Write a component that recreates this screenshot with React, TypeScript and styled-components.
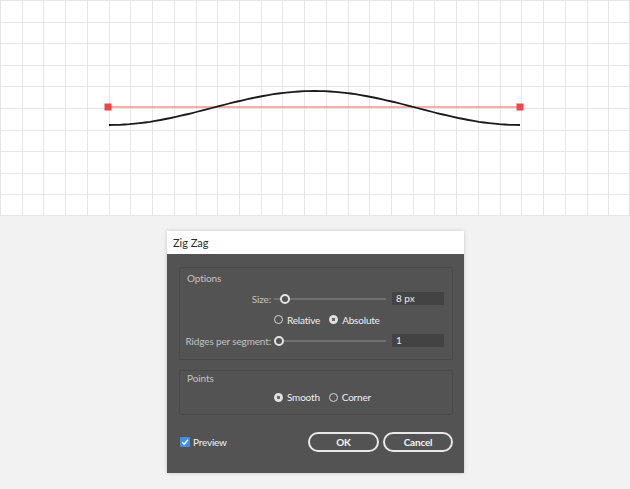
import React from "react";
import styled, { createGlobalStyle } from "styled-components";

const GlobalStyle = createGlobalStyle`
  html, body {
    margin: 0;
    padding: 0;
    background: #f2f2f2;
    font-family: Lato, "Open Sans", sans-serif;
  }
`;

const Page = styled.div`
  display: flex;
  flex-direction: column;
  width: 630px;
  height: 489px;
  overflow: hidden;
`;

const Canvas = styled.div`
  height: 216px;
  background: #ffffff;
  svg {
    display: block;
  }
`;

const Stage = styled.div`
  display: flex;
  justify-content: center;
  padding-top: 15px;
`;

const Dialog = styled.div`
  width: 297px;
  margin-left: 1px;
  box-shadow: 0 0 4px rgba(0, 0, 0, 0.18);
`;

const TitleBar = styled.div`
  height: 23px;
  display: flex;
  align-items: center;
  padding-left: 6px;
  background: #ffffff;
  color: #2b2b2b;
  font-size: 11px;
`;

const Body = styled.div`
  height: 219px;
  box-sizing: border-box;
  background: #535353;
  padding: 13px 11px 0 12px;
`;

const Group = styled.div<{ $gap?: number }>`
  border: 1px solid #4a4a4a;
  border-radius: 2px;
  margin-top: ${(p) => p.$gap ?? 0}px;
  padding-bottom: ${(p) => (p.$gap ? 7 : 8)}px;
`;

const GroupLabel = styled.div<{ $h: number; $pt: number }>`
  height: ${(p) => p.$h}px;
  box-sizing: border-box;
  padding: ${(p) => p.$pt}px 0 0 7px;
  line-height: 12px;
  font-size: 10px;
  letter-spacing: -0.1px;
  color: #c4c4c4;
`;

const Row = styled.div<{ $h?: number }>`
  display: grid;
  grid-template-columns: 94px 118px 52px;
  align-items: center;
  height: ${(p) => p.$h ?? 21}px;
`;

const FieldLabel = styled.span`
  justify-self: end;
  margin-right: 3px;
  font-size: 10px;
  letter-spacing: -0.15px;
  color: #c2c2c2;
  white-space: nowrap;
`;

const Track = styled.div`
  position: relative;
  height: 2px;
  margin-right: 6px;
  background: #707070;
`;

const Knob = styled.span`
  position: absolute;
  top: -4px;
  width: 10px;
  height: 10px;
  box-sizing: border-box;
  border-radius: 50%;
  border: 2px solid #e4e4e4;
  background: #535353;
`;

const NumberBox = styled.div`
  height: 13px;
  background: #434343;
  color: #ececec;
  font-size: 10px;
  line-height: 13px;
  padding-left: 4px;
`;

const RadioSet = styled.div`
  grid-column: 2 / 4;
  display: flex;
  align-items: center;
  gap: 9px;
`;

const RadioItem = styled.label`
  display: flex;
  align-items: center;
  gap: 4px;
  font-size: 10px;
  letter-spacing: -0.2px;
  color: #f0f0f0;
`;

const RadioDot = styled.span<{ $on?: boolean }>`
  width: 9px;
  height: 9px;
  box-sizing: border-box;
  border-radius: 50%;
  border: ${(p) => (p.$on ? "2px solid #e0e0e0" : "1px solid #d6d6d6")};
  background: ${(p) => (p.$on ? "radial-gradient(circle, #6a6a6a 0 1.5px, #e0e0e0 2px)" : "transparent")};
`;

const Footer = styled.div`
  display: flex;
  align-items: center;
  height: 20px;
  margin-top: 17px;
  padding-left: 1px;
`;

const Check = styled.label`
  display: flex;
  align-items: center;
  gap: 3px;
  font-size: 10px;
  letter-spacing: -0.2px;
  color: #f4f4f4;
  svg {
    display: block;
  }
`;

const Buttons = styled.div`
  margin-left: auto;
  display: flex;
  gap: 4px;
`;

const PillButton = styled.button<{ $w: number }>`
  width: ${(p) => p.$w}px;
  height: 20px;
  border: 2px solid #e8e8e8;
  border-radius: 10px;
  background: transparent;
  color: #f4f4f4;
  font-family: Lato, "Open Sans", sans-serif;
  font-size: 10px;
  font-weight: 700;
  letter-spacing: -0.2px;
  padding: 0;
`;

const Radio = ({ on, text }: { on?: boolean; text: string }) => (
  <RadioItem>
    <RadioDot $on={on} />
    {text}
  </RadioItem>
);

const Slider = ({ at }: { at: number }) => (
  <Track>
    <Knob style={{ left: at }} />
  </Track>
);

const GridDrawing = () => {
  const cols = Array.from({ length: 30 }, (_, i) => Math.min(629.5, Math.round((i * 630) / 29) + 0.5));
  const rows = Array.from({ length: 11 }, (_, j) => Math.min(215.5, Math.round(j * 21.6) + 0.5));
  const pts = Array.from({ length: 81 }, (_, i) => {
    const t = i / 80;
    return `${(109 + 411 * t).toFixed(1)},${(108 + 17 * Math.cos(2 * Math.PI * t)).toFixed(1)}`;
  }).join(" ");
  return (
    <svg width="630" height="216" viewBox="0 0 630 216">
      <g stroke="#e6e6e6" strokeWidth="1" shapeRendering="crispEdges">
        {cols.map((x) => (
          <line key={"c" + x} x1={x} y1="0" x2={x} y2="216" />
        ))}
        {rows.map((y) => (
          <line key={"r" + y} x1="0" y1={y} x2="630" y2={y} />
        ))}
      </g>
      <line x1="108" y1="107" x2="520" y2="107" stroke="#f25c5c" strokeWidth="1" />
      <polyline points={pts} fill="none" stroke="#1a1a1a" strokeWidth="1.8" />
      <rect x="104.5" y="103.5" width="7" height="7" fill="#ef4646" />
      <rect x="516.5" y="103.5" width="7" height="7" fill="#ef4646" />
    </svg>
  );
};

export default function App() {
  return (
    <Page>
      <GlobalStyle />
      <Canvas>
        <GridDrawing />
      </Canvas>
      <Stage>
        <Dialog>
          <TitleBar>Zig Zag</TitleBar>
          <Body>
            <Group>
              <GroupLabel $h={20} $pt={4}>Options</GroupLabel>
              <Row>
                <FieldLabel>Size:</FieldLabel>
                <Slider at={6} />
                <NumberBox>8 px</NumberBox>
              </Row>
              <Row>
                <span />
                <RadioSet>
                  <Radio text="Relative" />
                  <Radio on text="Absolute" />
                </RadioSet>
              </Row>
              <Row>
                <FieldLabel>Ridges per segment:</FieldLabel>
                <Slider at={0} />
                <NumberBox>1</NumberBox>
              </Row>
            </Group>
            <Group $gap={10}>
              <GroupLabel $h={16} $pt={1}>Points</GroupLabel>
              <Row $h={20}>
                <span />
                <RadioSet>
                  <Radio on text="Smooth" />
                  <Radio text="Corner" />
                </RadioSet>
              </Row>
            </Group>
            <Footer>
              <Check>
                <svg width="10" height="10" viewBox="0 0 10 10">
                  <rect width="10" height="10" rx="1" fill="#3f8fe0" />
                  <path d="M2.2 5.2 L4.2 7.2 L8 2.8" fill="none" stroke="#ffffff" strokeWidth="1.5" />
                </svg>
                Preview
              </Check>
              <Buttons>
                <PillButton $w={71}>OK</PillButton>
                <PillButton $w={70}>Cancel</PillButton>
              </Buttons>
            </Footer>
          </Body>
        </Dialog>
      </Stage>
    </Page>
  );
}
